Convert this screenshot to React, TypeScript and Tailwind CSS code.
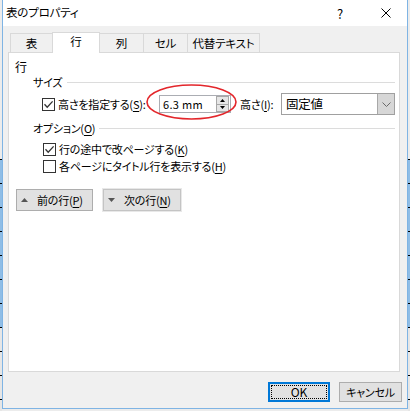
import React from 'react';

const font = "font-['Noto_Sans_CJK_JP','Noto_Sans',sans-serif] [font-feature-settings:'palt']";

function Key({ children }: { children: React.ReactNode }) {
  return <span className="underline underline-offset-[2px] decoration-1">{children}</span>;
}

function CheckBox({ checked }: { checked?: boolean }) {
  return (
    <span className="w-[13px] h-[13px] border border-[#333333] bg-white flex items-center justify-center shrink-0">
      {checked && (
        <svg width="11" height="11" viewBox="0 0 11 11">
          <path d="M1.5 5.3 L4.2 8.2 L9.6 2.4" fill="none" stroke="#333333" strokeWidth="1.3" />
        </svg>
      )}
    </span>
  );
}

// background document edge visible behind the dialog
function Strip({ blue }: { blue: number }) {
  return (
    <div className="w-[2px] h-[411px] flex flex-col overflow-hidden shrink-0">
      <div className="h-[159px] shrink-0 bg-[#ececec]" />
      {Array.from({ length: 11 }).map((_, i) => (
        <div
          key={i}
          className={`h-[24px] shrink-0 border-t border-black ${i < blue ? 'bg-[#8fbde6]' : 'bg-[#e6e6e6]'}`}
        />
      ))}
    </div>
  );
}

const tabs = [
  { label: '表', w: 'w-[42px]' },
  { label: '行', w: 'w-[48px]', active: true },
  { label: '列', w: 'w-[43px]' },
  { label: 'セル', w: 'w-[44px]' },
  { label: '代替テキスト', w: 'w-[73px]' },
];

export default function App() {
  return (
    <div className={`w-[410px] h-[411px] flex bg-[#ececec] text-[11px] tracking-[-0.2px] text-black leading-none overflow-hidden ${font}`}>
      <Strip blue={7} />

      <div className="w-[406px] flex flex-col shrink-0">
        <div className="w-[406px] h-[409px] border-x border-b border-[#7fb4e4] bg-[#f0f0f0] flex flex-col">
          {/* title bar */}
          <div className="h-[26px] bg-white flex items-center shrink-0">
            <span className="ml-[3px] text-[11.5px]">表のプロパティ</span>
            <span className="ml-auto w-[10px] text-center text-[13px]">?</span>
            <svg className="ml-[36px] mr-[16px]" width="10" height="10" viewBox="0 0 10 10">
              <path d="M0.5 0.5 L9.5 9.5 M9.5 0.5 L0.5 9.5" stroke="#000" strokeWidth="1" />
            </svg>
          </div>

          <div className="flex-1 flex flex-col pl-[5px] pr-[5px]">
            {/* tabs */}
            <div className="mt-[6px] h-[20px] flex items-end pl-[2px] shrink-0 text-[11.5px]">
              {tabs.map((t, i) =>
                t.active ? (
                  <div
                    key={t.label}
                    className={`${t.w} h-[21px] -mb-px relative z-10 bg-white border-t border-x border-[#d9d9d9] flex items-center justify-center pb-[2px]`}
                  >
                    {t.label}
                  </div>
                ) : (
                  <div
                    key={t.label}
                    className={`${t.w} h-[19px] bg-[#f0f0f0] border-t border-[#d9d9d9] flex items-center justify-center pt-[1px] ${i === tabs.length - 1 ? 'border-r' : ''} ${i === 2 ? '' : 'border-l'}`}
                  >
                    {t.label}
                  </div>
                )
              )}
            </div>

            {/* panel */}
            <div className="w-[392px] h-[320px] border border-[#d9d9d9] bg-white flex flex-col shrink-0">
              <div className="mt-[6px] h-[15px] pl-[6px] flex items-center text-[12px]">行</div>

              <div className="h-[16px] pl-[24px] flex items-center">
                <span>サイズ</span>
                <div className="flex-1 h-px bg-[#dcdcdc] ml-[5px] mr-[4px]" />
              </div>

              <div className="mt-[3px] h-[22px] pl-[33px] flex items-center relative">
                <CheckBox checked />
                <span className="ml-[3px] w-[101px] whitespace-nowrap">
                  高さを指定する(<Key>S</Key>):
                </span>
                <div className="w-[72px] h-[18px] border border-[#abadb3] bg-white flex items-center">
                  <span className="flex-1 pl-[3px] tracking-[0.3px] whitespace-pre">6.3 mm</span>
                  <div className="w-[13px] h-[16px] border border-[#a8a8a8] bg-[#e6e6e6] flex flex-col mr-px">
                    <div className="flex-1 flex items-center justify-center border-b border-[#a8a8a8]">
                      <svg width="5" height="3" viewBox="0 0 5 3">
                        <path d="M0 3 L2.5 0 L5 3 Z" fill="#000" />
                      </svg>
                    </div>
                    <div className="flex-1 flex items-center justify-center">
                      <svg width="5" height="3" viewBox="0 0 5 3">
                        <path d="M0 0 L2.5 3 L5 0 Z" fill="#000" />
                      </svg>
                    </div>
                  </div>
                </div>
                <span className="ml-[9px] w-[41px] whitespace-nowrap">
                  高さ(<Key>I</Key>):
                </span>
                <div className="w-[114px] h-[22px] border border-[#a0a0a0] bg-white flex items-center">
                  <span className="flex-1 pl-[4px] text-[12.5px]">固定値</span>
                  <div className="w-[17px] h-full bg-[#d7d7d7] border-l border-[#a8a8a8] flex items-center justify-center">
                    <svg width="9" height="5" viewBox="0 0 9 5">
                      <path d="M0.5 0.5 L4.5 4.5 L8.5 0.5" fill="none" stroke="#6a6a6a" strokeWidth="1" />
                    </svg>
                  </div>
                </div>
                <svg className="absolute left-[137px] top-[-9px]" width="92" height="37" viewBox="0 0 92 37">
                  <ellipse cx="45.5" cy="18" rx="44.5" ry="17" fill="none" stroke="#e3262b" strokeWidth="1.6" />
                </svg>
              </div>

              <div className="mt-[5px] h-[16px] pl-[24px] flex items-center">
                <span className="whitespace-nowrap">
                  オプション(<Key>O</Key>)
                </span>
                <div className="flex-1 h-px bg-[#dcdcdc] ml-[4px] mr-[4px]" />
              </div>

              <div className="mt-[5px] h-[17px] pl-[34px] flex items-center">
                <CheckBox checked />
                <span className="ml-[3px] whitespace-nowrap">
                  行の途中で改ページする(<Key>K</Key>)
                </span>
              </div>
              <div className="h-[17px] pl-[34px] flex items-center">
                <CheckBox />
                <span className="ml-[3px] whitespace-nowrap">
                  各ページにタイトル行を表示する(<Key>H</Key>)
                </span>
              </div>

              <div className="mt-[14px] h-[22px] pl-[7px] flex items-center gap-[10px]">
                <div className="w-[77px] h-[22px] bg-[#e1e1e1] border border-[#adadad] flex items-center">
                  <svg className="ml-[4px]" width="7" height="4" viewBox="0 0 7 4">
                    <path d="M0 4 L3.5 0 L7 4 Z" fill="#555" />
                  </svg>
                  <span className="ml-[9px] whitespace-nowrap">
                    前の行(<Key>P</Key>)
                  </span>
                </div>
                <div className="w-[78px] h-[22px] bg-[#e1e1e1] border border-[#c4c4c4] outline outline-1 outline-[#e8e8e8] flex items-center">
                  <svg className="ml-[4px]" width="7" height="4" viewBox="0 0 7 4">
                    <path d="M0 0 L3.5 4 L7 0 Z" fill="#555" />
                  </svg>
                  <span className="ml-[9px] whitespace-nowrap">
                    次の行(<Key>N</Key>)
                  </span>
                </div>
              </div>
            </div>

            {/* dialog buttons */}
            <div className="mt-[10px] flex justify-end gap-[9px] shrink-0">
              <div className="w-[62px] h-[20px] bg-[#e1e1e1] border-2 border-[#0078d7] p-px">
                <div className="w-full h-full border border-dotted border-black flex items-center justify-center text-[12px]">
                  OK
                </div>
              </div>
              <div className="w-[63px] h-[20px] bg-[#e1e1e1] border border-[#adadad] flex items-center justify-center">
                キャンセル
              </div>
            </div>
          </div>
        </div>
      </div>

      <Strip blue={7} />
    </div>
  );
}
